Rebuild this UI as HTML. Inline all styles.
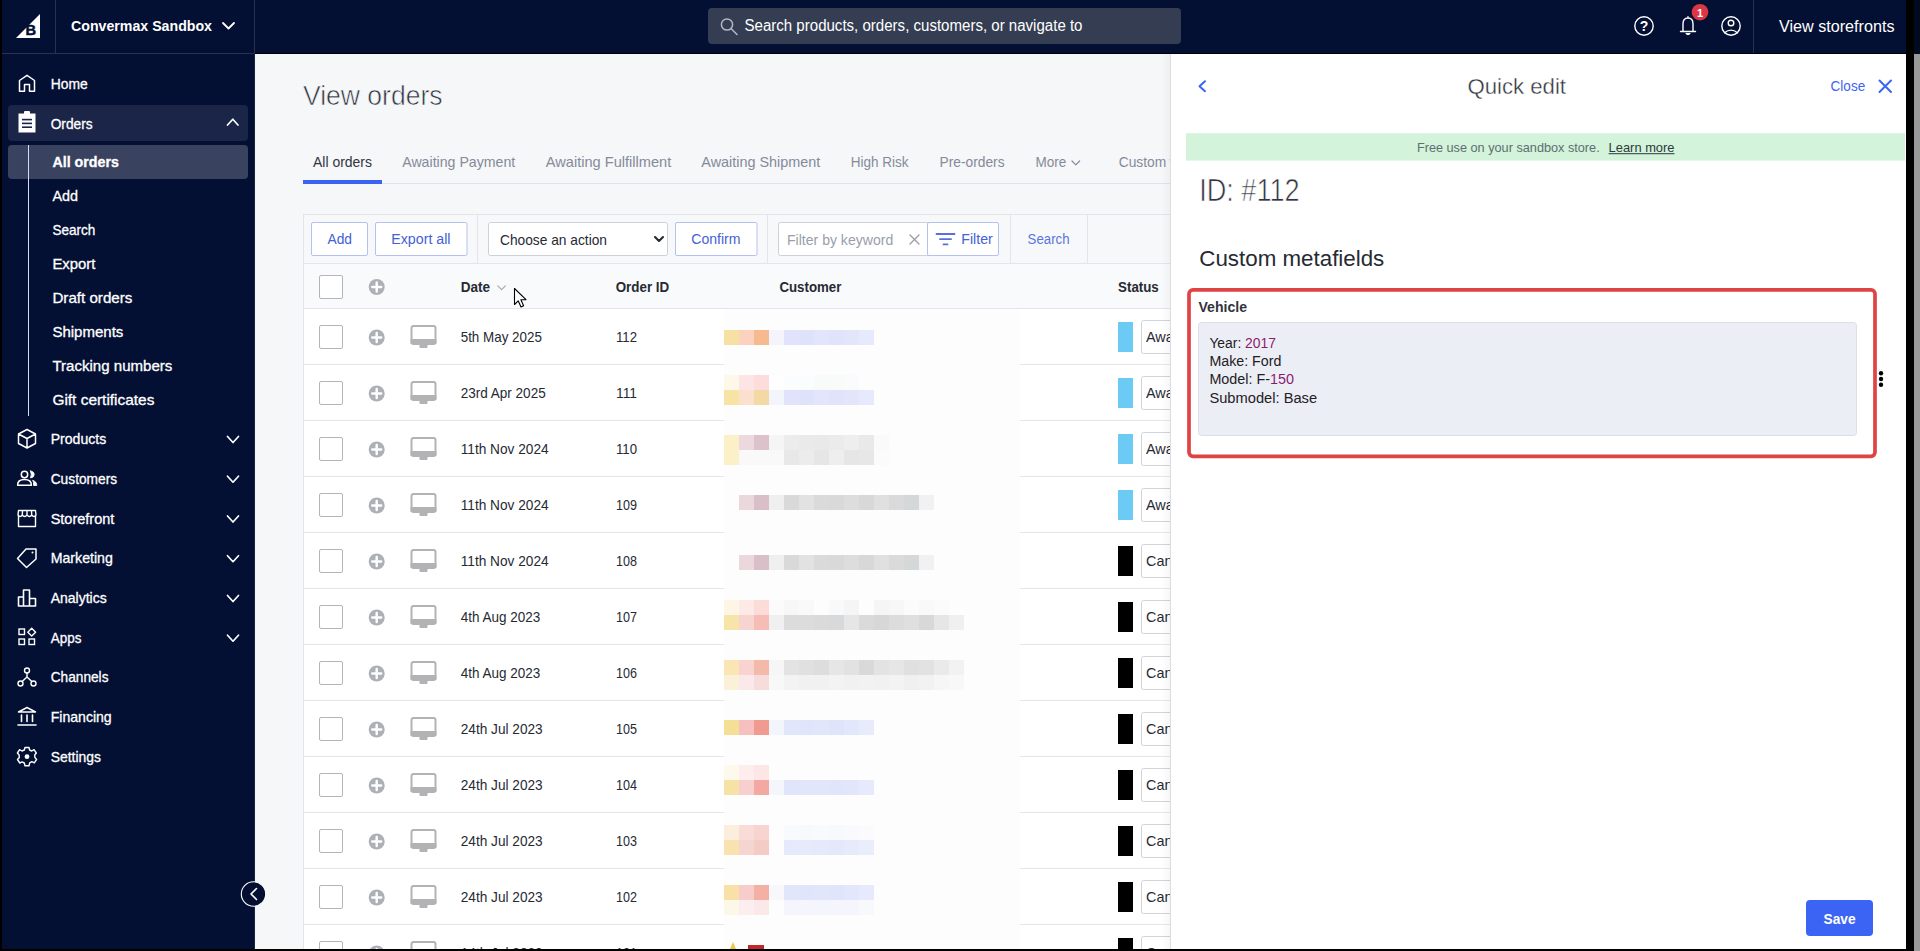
<!DOCTYPE html>
<html><head><meta charset="utf-8"><style>html,body{margin:0;padding:0;background:#000}body{width:1920px;height:951px;overflow:hidden}svg text{font-family:"Liberation Sans",sans-serif}</style></head>
<body><svg width="1920" height="951" viewBox="0 0 1920 951" style="display:block">
<rect x="0" y="0" width="1920" height="951" fill="#000" />
<rect x="2" y="0" width="1904" height="53" fill="#030f33" />
<rect x="1914" y="0" width="6" height="54" fill="#010a1f" />
<rect x="1914" y="54" width="6" height="897" fill="#999" />
<rect x="2" y="53" width="253" height="896" fill="#030f33" />
<rect x="2" y="53" width="252" height="1" fill="#283350" />
<rect x="254" y="0" width="1" height="53" fill="#283350" />
<rect x="254" y="53" width="1" height="896" fill="#1a2440" />
<rect x="55" y="0" width="1" height="53" fill="#283350" />
<rect x="1753" y="0" width="1" height="53" fill="#283350" />
<path d="M16 38 L40 14 L40 38 Z" stroke="none" stroke-width="1.5" fill="#fff" stroke-linecap="round" stroke-linejoin="round" />
<text x="25.6" y="34.6" font-size="15" font-weight="700" fill="#030f33" stroke="#030f33" stroke-width="0.5" textLength="10.6" lengthAdjust="spacingAndGlyphs">B</text>
<text x="71" y="30.8" font-size="15.1" fill="#fff" font-weight="700" textLength="141" lengthAdjust="spacingAndGlyphs" >Convermax Sandbox</text>
<path d="M223 23 L228.5 28.5 L234 23" stroke="#fff" stroke-width="1.8" fill="none" stroke-linecap="round" stroke-linejoin="round" />
<rect x="708" y="8" width="473" height="36" fill="#343d52" rx="4" />
<circle cx="727" cy="24.5" r="5.6" fill="none" stroke="#b3b8c5" stroke-width="1.5"/>
<path d="M731.2 28.8 L737 34.5" stroke="#b3b8c5" stroke-width="1.5" fill="none" stroke-linecap="round" stroke-linejoin="round" />
<text x="744.5" y="31.3" font-size="15.6" fill="#fff" textLength="338" lengthAdjust="spacingAndGlyphs" >Search products, orders, customers, or navigate to</text>
<circle cx="1644" cy="26" r="9.2" fill="none" stroke="#fff" stroke-width="1.4"/>
<text x="1644" y="31.3" font-size="14" font-weight="700" fill="#fff" text-anchor="middle">?</text>
<path d="M1683 31 L1683 24 Q1683 18 1688 18 Q1693 18 1693 24 L1693 31 M1680.5 31.5 L1695.5 31.5 M1688 16.8 L1688 18" stroke="#fff" stroke-width="1.4" fill="none" stroke-linecap="round" stroke-linejoin="round" />
<path d="M1686 33.5 Q1688 36 1690 33.5 Z" stroke="#fff" stroke-width="1.2" fill="#fff" stroke-linecap="round" stroke-linejoin="round" />
<circle cx="1700" cy="12.2" r="8.3" fill="#db3643"/>
<text x="1700" y="16.6" font-size="11" fill="#fff" font-weight="700" text-anchor="middle" >1</text>
<circle cx="1731" cy="26" r="9.2" fill="none" stroke="#fff" stroke-width="1.4"/>
<circle cx="1731" cy="23" r="2.8" fill="none" stroke="#fff" stroke-width="1.4"/>
<path d="M1724.5 32.8 Q1731 27.5 1737.5 32.8" stroke="#fff" stroke-width="1.4" fill="none" stroke-linecap="round" stroke-linejoin="round" />
<text x="1779" y="31.7" font-size="15.8" fill="#fff" textLength="115.5" lengthAdjust="spacingAndGlyphs" >View storefronts</text>
<rect x="8" y="105" width="240" height="36" fill="#1b2547" rx="4" />
<rect x="8" y="145" width="240" height="34" fill="#39425f" rx="4" />
<rect x="28" y="145" width="1" height="271" fill="#d3ddf6" />
<text x="50.7" y="88.9" font-size="14.5" fill="#fff" textLength="37" lengthAdjust="spacingAndGlyphs" stroke="#fff" stroke-width="0.3">Home</text>
<text x="50.7" y="129.1" font-size="14.5" fill="#fff" textLength="42" lengthAdjust="spacingAndGlyphs" stroke="#fff" stroke-width="0.3">Orders</text>
<text x="52.4" y="167.3" font-size="14.8" fill="#fff" font-weight="700" textLength="66.5" lengthAdjust="spacingAndGlyphs" stroke="#fff" stroke-width="0.3">All orders</text>
<text x="52.4" y="201" font-size="14.8" fill="#fff" textLength="25.6" lengthAdjust="spacingAndGlyphs" stroke="#fff" stroke-width="0.3">Add</text>
<text x="52.4" y="235" font-size="14.8" fill="#fff" textLength="43" lengthAdjust="spacingAndGlyphs" stroke="#fff" stroke-width="0.3">Search</text>
<text x="52.4" y="268.8" font-size="14.8" fill="#fff" textLength="43" lengthAdjust="spacingAndGlyphs" stroke="#fff" stroke-width="0.3">Export</text>
<text x="52.4" y="302.9" font-size="14.8" fill="#fff" textLength="80" lengthAdjust="spacingAndGlyphs" stroke="#fff" stroke-width="0.3">Draft orders</text>
<text x="52.4" y="336.8" font-size="14.8" fill="#fff" textLength="71" lengthAdjust="spacingAndGlyphs" stroke="#fff" stroke-width="0.3">Shipments</text>
<text x="52.4" y="370.7" font-size="14.8" fill="#fff" textLength="120" lengthAdjust="spacingAndGlyphs" stroke="#fff" stroke-width="0.3">Tracking numbers</text>
<text x="52.4" y="404.6" font-size="14.8" fill="#fff" textLength="102" lengthAdjust="spacingAndGlyphs" stroke="#fff" stroke-width="0.3">Gift certificates</text>
<text x="50.7" y="443.7" font-size="14.5" fill="#fff" textLength="55.5" lengthAdjust="spacingAndGlyphs" stroke="#fff" stroke-width="0.3">Products</text>
<text x="50.7" y="483.5" font-size="14.5" fill="#fff" textLength="66.5" lengthAdjust="spacingAndGlyphs" stroke="#fff" stroke-width="0.3">Customers</text>
<text x="50.7" y="523.5" font-size="14.5" fill="#fff" textLength="63.6" lengthAdjust="spacingAndGlyphs" stroke="#fff" stroke-width="0.3">Storefront</text>
<text x="50.7" y="563.2" font-size="14.5" fill="#fff" textLength="62.2" lengthAdjust="spacingAndGlyphs" stroke="#fff" stroke-width="0.3">Marketing</text>
<text x="50.7" y="602.9" font-size="14.5" fill="#fff" textLength="56" lengthAdjust="spacingAndGlyphs" stroke="#fff" stroke-width="0.3">Analytics</text>
<text x="50.7" y="642.6" font-size="14.5" fill="#fff" textLength="30.7" lengthAdjust="spacingAndGlyphs" stroke="#fff" stroke-width="0.3">Apps</text>
<text x="50.7" y="682.4" font-size="14.5" fill="#fff" textLength="57.8" lengthAdjust="spacingAndGlyphs" stroke="#fff" stroke-width="0.3">Channels</text>
<text x="50.7" y="722" font-size="14.5" fill="#fff" textLength="61" lengthAdjust="spacingAndGlyphs" stroke="#fff" stroke-width="0.3">Financing</text>
<text x="50.7" y="762.2" font-size="14.5" fill="#fff" textLength="50.3" lengthAdjust="spacingAndGlyphs" stroke="#fff" stroke-width="0.3">Settings</text>
<path d="M227.5 125 L232.8 119.2 L238 125" stroke="#fff" stroke-width="1.7" fill="none" stroke-linecap="round" stroke-linejoin="round" />
<path d="M227.5 436.5 L233 442.5 L238.5 436.5" stroke="#fff" stroke-width="1.7" fill="none" stroke-linecap="round" stroke-linejoin="round" />
<path d="M227.5 476.2 L233 482.2 L238.5 476.2" stroke="#fff" stroke-width="1.7" fill="none" stroke-linecap="round" stroke-linejoin="round" />
<path d="M227.5 516 L233 522 L238.5 516" stroke="#fff" stroke-width="1.7" fill="none" stroke-linecap="round" stroke-linejoin="round" />
<path d="M227.5 555.7 L233 561.7 L238.5 555.7" stroke="#fff" stroke-width="1.7" fill="none" stroke-linecap="round" stroke-linejoin="round" />
<path d="M227.5 595.5 L233 601.5 L238.5 595.5" stroke="#fff" stroke-width="1.7" fill="none" stroke-linecap="round" stroke-linejoin="round" />
<path d="M227.5 635.2 L233 641.2 L238.5 635.2" stroke="#fff" stroke-width="1.7" fill="none" stroke-linecap="round" stroke-linejoin="round" />
<path d="M19.5 91.2 L19.5 80.5 L27 75.3 L34.5 80.5 L34.5 91.2 L29.5 91.2 L29.5 84.5 L24.5 84.5 L24.5 91.2 Z" stroke="#fff" stroke-width="1.5" fill="none" stroke-linecap="round" stroke-linejoin="round" />
<path d="M18.5 113.5 L35.5 113.5 L35.5 132.5 L18.5 132.5 Z" stroke="none" stroke-width="1.5" fill="#fff" stroke-linecap="round" stroke-linejoin="round" />
<rect x="24" y="111" width="6" height="4" fill="#fff" rx="1" />
<rect x="22" y="118.8" width="10" height="1.6" fill="#1b2547" />
<rect x="22" y="122.6" width="10" height="1.6" fill="#1b2547" />
<rect x="22" y="126.4" width="10" height="1.6" fill="#1b2547" />
<path d="M27 429.5 L35.5 434 L35.5 443.5 L27 448 L18.5 443.5 L18.5 434 Z M18.5 434 L27 438.5 L35.5 434 M27 438.5 L27 448" stroke="#fff" stroke-width="1.5" fill="none" stroke-linecap="round" stroke-linejoin="round" />
<circle cx="24.5" cy="474.5" r="3.2" fill="none" stroke="#fff" stroke-width="1.5"/>
<path d="M17.6 485.2 Q17.6 479.6 24.5 479.6 Q31.4 479.6 31.4 485.2 Z" stroke="#fff" stroke-width="1.5" fill="none" stroke-linecap="round" stroke-linejoin="round" />
<path d="M30.5 471 Q34.2 471.5 34.2 474.5 Q34.2 477.5 30.5 478 Q32 474.5 30.5 471 Z" stroke="#fff" stroke-width="0.8" fill="#fff" stroke-linecap="round" stroke-linejoin="round" />
<path d="M33 480.5 Q36.8 481.5 36.8 485.5 L33.5 485.5 Q33.8 482.5 33 480.5 Z" stroke="#fff" stroke-width="0.8" fill="#fff" stroke-linecap="round" stroke-linejoin="round" />
<path d="M18.5 516 L18.5 526.5 L35.5 526.5 L35.5 516 M18.5 510.5 L35.5 510.5 L36 515 Q34 518 31.7 515 Q29.5 518 27 515 Q24.5 518 22.3 515 Q20 518 18 515 Z M22.5 510.5 L22.3 515 M27 510.5 L27 515 M31.5 510.5 L31.7 515" stroke="#fff" stroke-width="1.4" fill="none" stroke-linecap="round" stroke-linejoin="round" />
<path d="M26 549 L36 549 L36 559 L26.5 567.5 L17.5 558.5 Z" stroke="#fff" stroke-width="1.5" fill="none" stroke-linecap="round" stroke-linejoin="round" />
<circle cx="32.5" cy="552.5" r="1" fill="#fff"/>
<path d="M18.5 606 L18.5 597 L23.5 597 L23.5 606 M23.5 606 L23.5 590 L29.5 590 L29.5 606 M29.5 606 L29.5 598.5 L35.5 598.5 L35.5 606 Z M18.5 606 L35.5 606" stroke="#fff" stroke-width="1.6" fill="none" stroke-linecap="round" stroke-linejoin="round" />
<rect x="19" y="629" width="5.5" height="5.5" fill="none" stroke="#fff" stroke-width="1.4" />
<rect x="19" y="639" width="5.5" height="5.5" fill="none" stroke="#fff" stroke-width="1.4" />
<rect x="29" y="639" width="5.5" height="5.5" fill="none" stroke="#fff" stroke-width="1.4" />
<path d="M31.7 628.3 L35.6 632.2 L31.7 636.1 L27.8 632.2 Z" stroke="#fff" stroke-width="1.4" fill="none" stroke-linecap="round" stroke-linejoin="round" />
<circle cx="27" cy="670.5" r="2.5" fill="none" stroke="#fff" stroke-width="1.4"/>
<circle cx="20.5" cy="683.5" r="2.5" fill="none" stroke="#fff" stroke-width="1.4"/>
<circle cx="33.5" cy="683.5" r="2.5" fill="none" stroke="#fff" stroke-width="1.4"/>
<path d="M27 673 L27 677 L22.2 681.5 M27 677 L31.8 681.5" stroke="#fff" stroke-width="1.4" fill="none" stroke-linecap="round" stroke-linejoin="round" />
<path d="M18.5 712 L27 707.5 L35.5 712 Z" stroke="#fff" stroke-width="1.5" fill="none" stroke-linecap="round" stroke-linejoin="round" />
<path d="M21.5 715 L21.5 721.5 M27 715 L27 721.5 M32.5 715 L32.5 721.5 M18 725 L36 725" stroke="#fff" stroke-width="1.6" fill="none" stroke-linecap="round" stroke-linejoin="round" />
<path d="M25 747.5 L29 747.5 L29.6 750 L31.8 751 L34 749.7 L36.3 753 L34.7 755 L34.9 757.5 L36.6 759.4 L34.3 762.8 L31.9 761.7 L29.7 762.9 L29 765.8 L25 765.8 L24.3 763 L22.1 761.9 L19.8 763 L17.5 759.5 L19.3 757.5 L19.1 755 L17.4 753 L19.6 749.7 L22 751 L24.3 750 Z" stroke="#fff" stroke-width="1.4" fill="none" stroke-linecap="round" stroke-linejoin="round" />
<circle cx="27" cy="756.7" r="2.4" fill="#fff"/>
<svg x="255" y="54" width="916" height="895" overflow="hidden"><g transform="translate(-255,-54)">
<rect x="255" y="54" width="916" height="895" fill="#f5f7f8" />
<text x="303" y="104.6" font-size="28.5" fill="#313440" textLength="139.5" lengthAdjust="spacingAndGlyphs" stroke="#f5f7f8" stroke-width="0.65">View orders</text>
<rect x="303" y="183" width="868" height="1" fill="#dfe2e8" />
<rect x="303" y="180" width="79" height="4" fill="#3c64f4" />
<text x="313" y="166.7" font-size="14.4" fill="#313440" textLength="59" lengthAdjust="spacingAndGlyphs" >All orders</text>
<text x="402.2" y="166.7" font-size="14.4" fill="#858a9b" textLength="113.1" lengthAdjust="spacingAndGlyphs" >Awaiting Payment</text>
<text x="545.8" y="166.7" font-size="14.4" fill="#858a9b" textLength="125.4" lengthAdjust="spacingAndGlyphs" >Awaiting Fulfillment</text>
<text x="701.3" y="166.7" font-size="14.4" fill="#858a9b" textLength="119" lengthAdjust="spacingAndGlyphs" >Awaiting Shipment</text>
<text x="850.8" y="166.7" font-size="14.4" fill="#858a9b" textLength="57.8" lengthAdjust="spacingAndGlyphs" >High Risk</text>
<text x="939.5" y="166.7" font-size="14.4" fill="#858a9b" textLength="65.1" lengthAdjust="spacingAndGlyphs" >Pre-orders</text>
<text x="1035.5" y="166.7" font-size="14.4" fill="#858a9b" textLength="30.8" lengthAdjust="spacingAndGlyphs" >More</text>
<text x="1118.7" y="166.7" font-size="14.4" fill="#858a9b" textLength="47.6" lengthAdjust="spacingAndGlyphs" >Custom</text>
<text x="1169.5" y="166.7" font-size="14.4" fill="#858a9b" textLength="7" lengthAdjust="spacingAndGlyphs" >v</text>
<path d="M1072 161 L1075.8 164.8 L1079.6 161" stroke="#858a9b" stroke-width="1.2" fill="none" stroke-linecap="round" stroke-linejoin="round" />
<rect x="303" y="214" width="868" height="735" fill="#fff" />
<rect x="303" y="214" width="868" height="50" fill="#f7f8fa" />
<rect x="303" y="264" width="868" height="44" fill="#f9fafb" />
<rect x="303" y="214" width="868" height="1" fill="#e3e5ea" />
<rect x="303" y="263" width="868" height="1" fill="#e3e5ea" />
<rect x="303" y="308" width="868" height="1" fill="#e3e5ea" />
<rect x="303" y="214" width="1" height="735" fill="#e3e5ea" />
<rect x="477" y="215" width="1" height="48" fill="#e3e5ea" />
<rect x="767" y="215" width="1" height="48" fill="#e3e5ea" />
<rect x="1010" y="215" width="1" height="48" fill="#e3e5ea" />
<rect x="1087" y="215" width="1" height="48" fill="#e3e5ea" />
<rect x="311.5" y="222.5" width="56" height="33" fill="#fff" rx="1.5" stroke="#b5c1ee" stroke-width="1" />
<text x="327.5" y="243.7" font-size="15.3" fill="#4461d6" textLength="24.5" lengthAdjust="spacingAndGlyphs" >Add</text>
<rect x="375.5" y="222.5" width="91.5" height="33" fill="#fff" rx="1.5" stroke="#b5c1ee" stroke-width="1" />
<text x="391.3" y="243.7" font-size="15.3" fill="#4461d6" textLength="59.2" lengthAdjust="spacingAndGlyphs" >Export all</text>
<rect x="488.5" y="222.5" width="179" height="33" fill="#fff" rx="2" stroke="#cfd1d6" stroke-width="1" />
<text x="500" y="245" font-size="14.6" fill="#262a33" textLength="107" lengthAdjust="spacingAndGlyphs" >Choose an action</text>
<path d="M655 237 L659 241 L663 237" stroke="#262a33" stroke-width="2.1" fill="none" stroke-linecap="round" stroke-linejoin="round" />
<rect x="675.5" y="222.5" width="81.5" height="33" fill="#fff" rx="1.5" stroke="#b5c1ee" stroke-width="1" />
<text x="691.3" y="243.7" font-size="15.3" fill="#4461d6" textLength="49.2" lengthAdjust="spacingAndGlyphs" >Confirm</text>
<rect x="778.5" y="222.5" width="220" height="33" fill="#fff" rx="2" stroke="#cfd1d6" stroke-width="1" />
<text x="787" y="244.6" font-size="14.6" fill="#9a9eab" textLength="106.2" lengthAdjust="spacingAndGlyphs" >Filter by keyword</text>
<path d="M910 235 L919 244 M919 235 L910 244" stroke="#9a9da5" stroke-width="1.3" fill="none" stroke-linecap="round" stroke-linejoin="round" />
<rect x="927.5" y="222.5" width="71" height="33" fill="#fff" rx="1.5" stroke="#b5c1ee" stroke-width="1" />
<path d="M936.5 234 L954.5 234 M940 239.2 L951 239.2 M943.5 244.4 L947.5 244.4" stroke="#5670dc" stroke-width="1.8" fill="none" stroke-linecap="round" stroke-linejoin="round" />
<text x="961.3" y="243.7" font-size="15.3" fill="#4461d6" textLength="31.5" lengthAdjust="spacingAndGlyphs" >Filter</text>
<text x="1027.6" y="243.7" font-size="15.3" fill="#5b74dd" textLength="42" lengthAdjust="spacingAndGlyphs" >Search</text>
<rect x="319.5" y="275.5" width="23" height="23" fill="#fff" rx="1.5" stroke="#b3b5bb" stroke-width="1" />
<circle cx="376.7" cy="287" r="8" fill="#aeb0b8"/>
<path d="M376.7 282.5 L376.7 291.5 M372.2 287 L381.2 287" stroke="#fff" stroke-width="2.4" fill="none" stroke-linecap="round" stroke-linejoin="round" stroke-linecap="butt"/>
<text x="460.7" y="291.9" font-size="15.5" fill="#262a33" font-weight="700" textLength="29.3" lengthAdjust="spacingAndGlyphs" >Date</text>
<path d="M497.8 285.8 L501.6 289.6 L505.4 285.8" stroke="#a8aab0" stroke-width="1.2" fill="none" stroke-linecap="round" stroke-linejoin="round" />
<text x="615.7" y="291.9" font-size="15.5" fill="#262a33" font-weight="700" textLength="53.5" lengthAdjust="spacingAndGlyphs" >Order ID</text>
<text x="779.4" y="291.9" font-size="15.5" fill="#262a33" font-weight="700" textLength="62" lengthAdjust="spacingAndGlyphs" >Customer</text>
<text x="1118.1" y="291.9" font-size="15.5" fill="#262a33" font-weight="700" textLength="40.6" lengthAdjust="spacingAndGlyphs" >Status</text>
<path d="M514.5 288.5 L514.5 304.5 L518.2 300.8 L521 307 L523.6 305.8 L520.9 299.8 L526 299.6 Z" stroke="#000" stroke-width="1.1" fill="#fff" stroke-linecap="round" stroke-linejoin="round" />
<rect x="319.5" y="325.5" width="23" height="23" fill="#fff" rx="1.5" stroke="#b3b5bb" stroke-width="1" />
<circle cx="376.7" cy="337.5" r="8" fill="#aeb0b8"/>
<path d="M376.7 333 L376.7 342 M372.2 337.5 L381.2 337.5" stroke="#fff" stroke-width="2.4" fill="none" stroke-linecap="round" stroke-linejoin="round" stroke-linecap="butt"/>
<rect x="411.5" y="326" width="24" height="18" fill="#fff" rx="2" stroke="#b3b3b6" stroke-width="2" />
<rect x="410.5" y="339" width="26" height="5" fill="#b3b3b6" rx="1" />
<rect x="419.5" y="344" width="8" height="4" fill="#b3b3b6" rx="1" />
<text x="460.7" y="341.7" font-size="14.4" fill="#262a33" textLength="81.2" lengthAdjust="spacingAndGlyphs" >5th May 2025</text>
<text x="616" y="341.7" font-size="14.4" fill="#262a33" textLength="21" lengthAdjust="spacingAndGlyphs" >112</text>
<rect x="1118" y="322" width="15" height="30" fill="#6ccbf4" />
<rect x="1141.5" y="320.5" width="60" height="33" fill="#fff" rx="2" stroke="#d2d4d9" stroke-width="1" />
<text x="1146" y="341.7" font-size="14.4" fill="#262a33" >Awaiting</text>
<rect x="303" y="364" width="868" height="1" fill="#e5e6ea" />
<rect x="319.5" y="381.5" width="23" height="23" fill="#fff" rx="1.5" stroke="#b3b5bb" stroke-width="1" />
<circle cx="376.7" cy="393.5" r="8" fill="#aeb0b8"/>
<path d="M376.7 389 L376.7 398 M372.2 393.5 L381.2 393.5" stroke="#fff" stroke-width="2.4" fill="none" stroke-linecap="round" stroke-linejoin="round" stroke-linecap="butt"/>
<rect x="411.5" y="382" width="24" height="18" fill="#fff" rx="2" stroke="#b3b3b6" stroke-width="2" />
<rect x="410.5" y="395" width="26" height="5" fill="#b3b3b6" rx="1" />
<rect x="419.5" y="400" width="8" height="4" fill="#b3b3b6" rx="1" />
<text x="460.7" y="397.7" font-size="14.4" fill="#262a33" textLength="85" lengthAdjust="spacingAndGlyphs" >23rd Apr 2025</text>
<text x="616" y="397.7" font-size="14.4" fill="#262a33" textLength="21" lengthAdjust="spacingAndGlyphs" >111</text>
<rect x="1118" y="378" width="15" height="30" fill="#6ccbf4" />
<rect x="1141.5" y="376.5" width="60" height="33" fill="#fff" rx="2" stroke="#d2d4d9" stroke-width="1" />
<text x="1146" y="397.7" font-size="14.4" fill="#262a33" >Awaiting</text>
<rect x="303" y="420" width="868" height="1" fill="#e5e6ea" />
<rect x="319.5" y="437.5" width="23" height="23" fill="#fff" rx="1.5" stroke="#b3b5bb" stroke-width="1" />
<circle cx="376.7" cy="449.5" r="8" fill="#aeb0b8"/>
<path d="M376.7 445 L376.7 454 M372.2 449.5 L381.2 449.5" stroke="#fff" stroke-width="2.4" fill="none" stroke-linecap="round" stroke-linejoin="round" stroke-linecap="butt"/>
<rect x="411.5" y="438" width="24" height="18" fill="#fff" rx="2" stroke="#b3b3b6" stroke-width="2" />
<rect x="410.5" y="451" width="26" height="5" fill="#b3b3b6" rx="1" />
<rect x="419.5" y="456" width="8" height="4" fill="#b3b3b6" rx="1" />
<text x="460.7" y="453.7" font-size="14.4" fill="#262a33" textLength="88" lengthAdjust="spacingAndGlyphs" >11th Nov 2024</text>
<text x="616" y="453.7" font-size="14.4" fill="#262a33" textLength="21" lengthAdjust="spacingAndGlyphs" >110</text>
<rect x="1118" y="434" width="15" height="30" fill="#6ccbf4" />
<rect x="1141.5" y="432.5" width="60" height="33" fill="#fff" rx="2" stroke="#d2d4d9" stroke-width="1" />
<text x="1146" y="453.7" font-size="14.4" fill="#262a33" >Awaiting</text>
<rect x="303" y="476" width="868" height="1" fill="#e5e6ea" />
<rect x="319.5" y="493.5" width="23" height="23" fill="#fff" rx="1.5" stroke="#b3b5bb" stroke-width="1" />
<circle cx="376.7" cy="505.5" r="8" fill="#aeb0b8"/>
<path d="M376.7 501 L376.7 510 M372.2 505.5 L381.2 505.5" stroke="#fff" stroke-width="2.4" fill="none" stroke-linecap="round" stroke-linejoin="round" stroke-linecap="butt"/>
<rect x="411.5" y="494" width="24" height="18" fill="#fff" rx="2" stroke="#b3b3b6" stroke-width="2" />
<rect x="410.5" y="507" width="26" height="5" fill="#b3b3b6" rx="1" />
<rect x="419.5" y="512" width="8" height="4" fill="#b3b3b6" rx="1" />
<text x="460.7" y="509.7" font-size="14.4" fill="#262a33" textLength="88" lengthAdjust="spacingAndGlyphs" >11th Nov 2024</text>
<text x="616" y="509.7" font-size="14.4" fill="#262a33" textLength="21" lengthAdjust="spacingAndGlyphs" >109</text>
<rect x="1118" y="490" width="15" height="30" fill="#6ccbf4" />
<rect x="1141.5" y="488.5" width="60" height="33" fill="#fff" rx="2" stroke="#d2d4d9" stroke-width="1" />
<text x="1146" y="509.7" font-size="14.4" fill="#262a33" >Awaiting</text>
<rect x="303" y="532" width="868" height="1" fill="#e5e6ea" />
<rect x="319.5" y="549.5" width="23" height="23" fill="#fff" rx="1.5" stroke="#b3b5bb" stroke-width="1" />
<circle cx="376.7" cy="561.5" r="8" fill="#aeb0b8"/>
<path d="M376.7 557 L376.7 566 M372.2 561.5 L381.2 561.5" stroke="#fff" stroke-width="2.4" fill="none" stroke-linecap="round" stroke-linejoin="round" stroke-linecap="butt"/>
<rect x="411.5" y="550" width="24" height="18" fill="#fff" rx="2" stroke="#b3b3b6" stroke-width="2" />
<rect x="410.5" y="563" width="26" height="5" fill="#b3b3b6" rx="1" />
<rect x="419.5" y="568" width="8" height="4" fill="#b3b3b6" rx="1" />
<text x="460.7" y="565.7" font-size="14.4" fill="#262a33" textLength="88" lengthAdjust="spacingAndGlyphs" >11th Nov 2024</text>
<text x="616" y="565.7" font-size="14.4" fill="#262a33" textLength="21" lengthAdjust="spacingAndGlyphs" >108</text>
<rect x="1118" y="546" width="15" height="30" fill="#000" />
<rect x="1141.5" y="544.5" width="60" height="33" fill="#fff" rx="2" stroke="#d2d4d9" stroke-width="1" />
<text x="1146" y="565.7" font-size="14.4" fill="#262a33" >Cancelled</text>
<rect x="303" y="588" width="868" height="1" fill="#e5e6ea" />
<rect x="319.5" y="605.5" width="23" height="23" fill="#fff" rx="1.5" stroke="#b3b5bb" stroke-width="1" />
<circle cx="376.7" cy="617.5" r="8" fill="#aeb0b8"/>
<path d="M376.7 613 L376.7 622 M372.2 617.5 L381.2 617.5" stroke="#fff" stroke-width="2.4" fill="none" stroke-linecap="round" stroke-linejoin="round" stroke-linecap="butt"/>
<rect x="411.5" y="606" width="24" height="18" fill="#fff" rx="2" stroke="#b3b3b6" stroke-width="2" />
<rect x="410.5" y="619" width="26" height="5" fill="#b3b3b6" rx="1" />
<rect x="419.5" y="624" width="8" height="4" fill="#b3b3b6" rx="1" />
<text x="460.7" y="621.7" font-size="14.4" fill="#262a33" textLength="79.5" lengthAdjust="spacingAndGlyphs" >4th Aug 2023</text>
<text x="616" y="621.7" font-size="14.4" fill="#262a33" textLength="21" lengthAdjust="spacingAndGlyphs" >107</text>
<rect x="1118" y="602" width="15" height="30" fill="#000" />
<rect x="1141.5" y="600.5" width="60" height="33" fill="#fff" rx="2" stroke="#d2d4d9" stroke-width="1" />
<text x="1146" y="621.7" font-size="14.4" fill="#262a33" >Cancelled</text>
<rect x="303" y="644" width="868" height="1" fill="#e5e6ea" />
<rect x="319.5" y="661.5" width="23" height="23" fill="#fff" rx="1.5" stroke="#b3b5bb" stroke-width="1" />
<circle cx="376.7" cy="673.5" r="8" fill="#aeb0b8"/>
<path d="M376.7 669 L376.7 678 M372.2 673.5 L381.2 673.5" stroke="#fff" stroke-width="2.4" fill="none" stroke-linecap="round" stroke-linejoin="round" stroke-linecap="butt"/>
<rect x="411.5" y="662" width="24" height="18" fill="#fff" rx="2" stroke="#b3b3b6" stroke-width="2" />
<rect x="410.5" y="675" width="26" height="5" fill="#b3b3b6" rx="1" />
<rect x="419.5" y="680" width="8" height="4" fill="#b3b3b6" rx="1" />
<text x="460.7" y="677.7" font-size="14.4" fill="#262a33" textLength="79.5" lengthAdjust="spacingAndGlyphs" >4th Aug 2023</text>
<text x="616" y="677.7" font-size="14.4" fill="#262a33" textLength="21" lengthAdjust="spacingAndGlyphs" >106</text>
<rect x="1118" y="658" width="15" height="30" fill="#000" />
<rect x="1141.5" y="656.5" width="60" height="33" fill="#fff" rx="2" stroke="#d2d4d9" stroke-width="1" />
<text x="1146" y="677.7" font-size="14.4" fill="#262a33" >Cancelled</text>
<rect x="303" y="700" width="868" height="1" fill="#e5e6ea" />
<rect x="319.5" y="717.5" width="23" height="23" fill="#fff" rx="1.5" stroke="#b3b5bb" stroke-width="1" />
<circle cx="376.7" cy="729.5" r="8" fill="#aeb0b8"/>
<path d="M376.7 725 L376.7 734 M372.2 729.5 L381.2 729.5" stroke="#fff" stroke-width="2.4" fill="none" stroke-linecap="round" stroke-linejoin="round" stroke-linecap="butt"/>
<rect x="411.5" y="718" width="24" height="18" fill="#fff" rx="2" stroke="#b3b3b6" stroke-width="2" />
<rect x="410.5" y="731" width="26" height="5" fill="#b3b3b6" rx="1" />
<rect x="419.5" y="736" width="8" height="4" fill="#b3b3b6" rx="1" />
<text x="460.7" y="733.7" font-size="14.4" fill="#262a33" textLength="82" lengthAdjust="spacingAndGlyphs" >24th Jul 2023</text>
<text x="616" y="733.7" font-size="14.4" fill="#262a33" textLength="21" lengthAdjust="spacingAndGlyphs" >105</text>
<rect x="1118" y="714" width="15" height="30" fill="#000" />
<rect x="1141.5" y="712.5" width="60" height="33" fill="#fff" rx="2" stroke="#d2d4d9" stroke-width="1" />
<text x="1146" y="733.7" font-size="14.4" fill="#262a33" >Cancelled</text>
<rect x="303" y="756" width="868" height="1" fill="#e5e6ea" />
<rect x="319.5" y="773.5" width="23" height="23" fill="#fff" rx="1.5" stroke="#b3b5bb" stroke-width="1" />
<circle cx="376.7" cy="785.5" r="8" fill="#aeb0b8"/>
<path d="M376.7 781 L376.7 790 M372.2 785.5 L381.2 785.5" stroke="#fff" stroke-width="2.4" fill="none" stroke-linecap="round" stroke-linejoin="round" stroke-linecap="butt"/>
<rect x="411.5" y="774" width="24" height="18" fill="#fff" rx="2" stroke="#b3b3b6" stroke-width="2" />
<rect x="410.5" y="787" width="26" height="5" fill="#b3b3b6" rx="1" />
<rect x="419.5" y="792" width="8" height="4" fill="#b3b3b6" rx="1" />
<text x="460.7" y="789.7" font-size="14.4" fill="#262a33" textLength="82" lengthAdjust="spacingAndGlyphs" >24th Jul 2023</text>
<text x="616" y="789.7" font-size="14.4" fill="#262a33" textLength="21" lengthAdjust="spacingAndGlyphs" >104</text>
<rect x="1118" y="770" width="15" height="30" fill="#000" />
<rect x="1141.5" y="768.5" width="60" height="33" fill="#fff" rx="2" stroke="#d2d4d9" stroke-width="1" />
<text x="1146" y="789.7" font-size="14.4" fill="#262a33" >Cancelled</text>
<rect x="303" y="812" width="868" height="1" fill="#e5e6ea" />
<rect x="319.5" y="829.5" width="23" height="23" fill="#fff" rx="1.5" stroke="#b3b5bb" stroke-width="1" />
<circle cx="376.7" cy="841.5" r="8" fill="#aeb0b8"/>
<path d="M376.7 837 L376.7 846 M372.2 841.5 L381.2 841.5" stroke="#fff" stroke-width="2.4" fill="none" stroke-linecap="round" stroke-linejoin="round" stroke-linecap="butt"/>
<rect x="411.5" y="830" width="24" height="18" fill="#fff" rx="2" stroke="#b3b3b6" stroke-width="2" />
<rect x="410.5" y="843" width="26" height="5" fill="#b3b3b6" rx="1" />
<rect x="419.5" y="848" width="8" height="4" fill="#b3b3b6" rx="1" />
<text x="460.7" y="845.7" font-size="14.4" fill="#262a33" textLength="82" lengthAdjust="spacingAndGlyphs" >24th Jul 2023</text>
<text x="616" y="845.7" font-size="14.4" fill="#262a33" textLength="21" lengthAdjust="spacingAndGlyphs" >103</text>
<rect x="1118" y="826" width="15" height="30" fill="#000" />
<rect x="1141.5" y="824.5" width="60" height="33" fill="#fff" rx="2" stroke="#d2d4d9" stroke-width="1" />
<text x="1146" y="845.7" font-size="14.4" fill="#262a33" >Cancelled</text>
<rect x="303" y="868" width="868" height="1" fill="#e5e6ea" />
<rect x="319.5" y="885.5" width="23" height="23" fill="#fff" rx="1.5" stroke="#b3b5bb" stroke-width="1" />
<circle cx="376.7" cy="897.5" r="8" fill="#aeb0b8"/>
<path d="M376.7 893 L376.7 902 M372.2 897.5 L381.2 897.5" stroke="#fff" stroke-width="2.4" fill="none" stroke-linecap="round" stroke-linejoin="round" stroke-linecap="butt"/>
<rect x="411.5" y="886" width="24" height="18" fill="#fff" rx="2" stroke="#b3b3b6" stroke-width="2" />
<rect x="410.5" y="899" width="26" height="5" fill="#b3b3b6" rx="1" />
<rect x="419.5" y="904" width="8" height="4" fill="#b3b3b6" rx="1" />
<text x="460.7" y="901.7" font-size="14.4" fill="#262a33" textLength="82" lengthAdjust="spacingAndGlyphs" >24th Jul 2023</text>
<text x="616" y="901.7" font-size="14.4" fill="#262a33" textLength="21" lengthAdjust="spacingAndGlyphs" >102</text>
<rect x="1118" y="882" width="15" height="30" fill="#000" />
<rect x="1141.5" y="880.5" width="60" height="33" fill="#fff" rx="2" stroke="#d2d4d9" stroke-width="1" />
<text x="1146" y="901.7" font-size="14.4" fill="#262a33" >Cancelled</text>
<rect x="303" y="924" width="868" height="1" fill="#e5e6ea" />
<rect x="319.5" y="941.5" width="23" height="23" fill="#fff" rx="1.5" stroke="#b3b5bb" stroke-width="1" />
<circle cx="376.7" cy="953.5" r="8" fill="#aeb0b8"/>
<path d="M376.7 949 L376.7 958 M372.2 953.5 L381.2 953.5" stroke="#fff" stroke-width="2.4" fill="none" stroke-linecap="round" stroke-linejoin="round" stroke-linecap="butt"/>
<rect x="411.5" y="942" width="24" height="18" fill="#fff" rx="2" stroke="#b3b3b6" stroke-width="2" />
<rect x="410.5" y="955" width="26" height="5" fill="#b3b3b6" rx="1" />
<rect x="419.5" y="960" width="8" height="4" fill="#b3b3b6" rx="1" />
<text x="460.7" y="957.7" font-size="14.4" fill="#262a33" textLength="82" lengthAdjust="spacingAndGlyphs" >14th Jul 2023</text>
<text x="616" y="957.7" font-size="14.4" fill="#262a33" textLength="21" lengthAdjust="spacingAndGlyphs" >101</text>
<rect x="1118" y="938" width="15" height="30" fill="#000" />
<rect x="1141.5" y="936.5" width="60" height="33" fill="#fff" rx="2" stroke="#d2d4d9" stroke-width="1" />
<text x="1146" y="957.7" font-size="14.4" fill="#262a33" >Cancelled</text>
<rect x="724" y="309" width="296" height="640" fill="#fdfdfd" />
<rect x="724" y="330" width="15" height="15" fill="#f7e0a3" />
<rect x="739" y="330" width="15" height="15" fill="#fcd2bf" />
<rect x="754" y="330" width="15" height="15" fill="#f7b98e" />
<rect x="769" y="330" width="15" height="15" fill="#f3f4fc" />
<rect x="784" y="330" width="15" height="15" fill="#e0e3fb" />
<rect x="799" y="330" width="15" height="15" fill="#dfe2fb" />
<rect x="814" y="330" width="15" height="15" fill="#e2e5fb" />
<rect x="829" y="330" width="15" height="15" fill="#e1e3fb" />
<rect x="844" y="330" width="15" height="15" fill="#e3e5fb" />
<rect x="859" y="330" width="15" height="15" fill="#e7e9fc" />
<rect x="724" y="375" width="15" height="15" fill="#fdf8e8" />
<rect x="739" y="375" width="15" height="15" fill="#fde5e5" />
<rect x="754" y="375" width="15" height="15" fill="#fddcdc" />
<rect x="769" y="375" width="15" height="15" fill="#fefefe" />
<rect x="784" y="375" width="15" height="15" fill="#fbfcfd" />
<rect x="799" y="375" width="15" height="15" fill="#fbfcfd" />
<rect x="814" y="375" width="15" height="15" fill="#f9fbfb" />
<rect x="829" y="375" width="15" height="15" fill="#f9fbfb" />
<rect x="844" y="375" width="15" height="15" fill="#fbfbfd" />
<rect x="859" y="375" width="15" height="15" fill="#fdfdfd" />
<rect x="724" y="390" width="15" height="15" fill="#f7e4a5" />
<rect x="739" y="390" width="15" height="15" fill="#fbe1cd" />
<rect x="754" y="390" width="15" height="15" fill="#f5d9a5" />
<rect x="769" y="390" width="15" height="15" fill="#f3f5fc" />
<rect x="784" y="390" width="15" height="15" fill="#e0e3fb" />
<rect x="799" y="390" width="15" height="15" fill="#dfe2fb" />
<rect x="814" y="390" width="15" height="15" fill="#e2e5fb" />
<rect x="829" y="390" width="15" height="15" fill="#e1e3fb" />
<rect x="844" y="390" width="15" height="15" fill="#e3e5fb" />
<rect x="859" y="390" width="15" height="15" fill="#e7e9fc" />
<rect x="724" y="435" width="15" height="15" fill="#fbf0c8" />
<rect x="739" y="435" width="15" height="15" fill="#ecd9dd" />
<rect x="754" y="435" width="15" height="15" fill="#dcc2cb" />
<rect x="769" y="435" width="15" height="15" fill="#f5f5f5" />
<rect x="784" y="435" width="15" height="15" fill="#ececec" />
<rect x="799" y="435" width="15" height="15" fill="#eaeaea" />
<rect x="814" y="435" width="15" height="15" fill="#e9e9ea" />
<rect x="829" y="435" width="15" height="15" fill="#ebebeb" />
<rect x="844" y="435" width="15" height="15" fill="#eeeeee" />
<rect x="859" y="435" width="15" height="15" fill="#e9e9e9" />
<rect x="874" y="435" width="15" height="15" fill="#fafafa" />
<rect x="724" y="450" width="15" height="15" fill="#fbf0c8" />
<rect x="739" y="450" width="15" height="15" fill="#f9f9f9" />
<rect x="754" y="450" width="15" height="15" fill="#f9f9f9" />
<rect x="769" y="450" width="15" height="15" fill="#f9f9f9" />
<rect x="784" y="450" width="15" height="15" fill="#e8e8e8" />
<rect x="799" y="450" width="15" height="15" fill="#ececec" />
<rect x="814" y="450" width="15" height="15" fill="#e6e6e6" />
<rect x="829" y="450" width="15" height="15" fill="#eeeeee" />
<rect x="844" y="450" width="15" height="15" fill="#e6e6e6" />
<rect x="859" y="450" width="15" height="15" fill="#e7e7e7" />
<rect x="874" y="450" width="15" height="15" fill="#fbfbfb" />
<rect x="739" y="495" width="15" height="15" fill="#ebd8dd" />
<rect x="754" y="495" width="15" height="15" fill="#d9c0c8" />
<rect x="769" y="495" width="15" height="15" fill="#efefef" />
<rect x="784" y="495" width="15" height="15" fill="#d9d9d9" />
<rect x="799" y="495" width="15" height="15" fill="#e2e2e3" />
<rect x="814" y="495" width="15" height="15" fill="#dadada" />
<rect x="829" y="495" width="15" height="15" fill="#d9d9da" />
<rect x="844" y="495" width="15" height="15" fill="#dddddd" />
<rect x="859" y="495" width="15" height="15" fill="#d8d8d9" />
<rect x="874" y="495" width="15" height="15" fill="#e0e0e0" />
<rect x="889" y="495" width="15" height="15" fill="#dadadb" />
<rect x="904" y="495" width="15" height="15" fill="#d5d8d9" />
<rect x="919" y="495" width="15" height="15" fill="#f1f1f3" />
<rect x="739" y="555" width="15" height="15" fill="#ebd8dd" />
<rect x="754" y="555" width="15" height="15" fill="#d9c0c8" />
<rect x="769" y="555" width="15" height="15" fill="#efefef" />
<rect x="784" y="555" width="15" height="15" fill="#d9d9d9" />
<rect x="799" y="555" width="15" height="15" fill="#e2e2e3" />
<rect x="814" y="555" width="15" height="15" fill="#dadada" />
<rect x="829" y="555" width="15" height="15" fill="#d9d9da" />
<rect x="844" y="555" width="15" height="15" fill="#dddddd" />
<rect x="859" y="555" width="15" height="15" fill="#d8d8d9" />
<rect x="874" y="555" width="15" height="15" fill="#e0e0e0" />
<rect x="889" y="555" width="15" height="15" fill="#dadadb" />
<rect x="904" y="555" width="15" height="15" fill="#d5d8d9" />
<rect x="919" y="555" width="15" height="15" fill="#f1f1f3" />
<rect x="724" y="600" width="15" height="15" fill="#fdf5e6" />
<rect x="739" y="600" width="15" height="15" fill="#fde9e6" />
<rect x="754" y="600" width="15" height="15" fill="#fcdcd8" />
<rect x="769" y="600" width="15" height="15" fill="#fbfbfb" />
<rect x="784" y="600" width="15" height="15" fill="#f7f7f7" />
<rect x="799" y="600" width="15" height="15" fill="#f9f9f9" />
<rect x="814" y="600" width="15" height="15" fill="#fdfdfd" />
<rect x="829" y="600" width="15" height="15" fill="#f9f9f9" />
<rect x="844" y="600" width="15" height="15" fill="#f5f5f5" />
<rect x="859" y="600" width="15" height="15" fill="#fdfdfd" />
<rect x="874" y="600" width="15" height="15" fill="#f5f5f5" />
<rect x="889" y="600" width="15" height="15" fill="#f7f7f7" />
<rect x="904" y="600" width="15" height="15" fill="#fbfbfb" />
<rect x="919" y="600" width="15" height="15" fill="#f9f9f9" />
<rect x="934" y="600" width="15" height="15" fill="#fbfbfb" />
<rect x="949" y="600" width="15" height="15" fill="#fdfdfd" />
<rect x="724" y="615" width="15" height="15" fill="#f7e4a8" />
<rect x="739" y="615" width="15" height="15" fill="#f8d4d0" />
<rect x="754" y="615" width="15" height="15" fill="#f5bdb5" />
<rect x="769" y="615" width="15" height="15" fill="#f0f0f0" />
<rect x="784" y="615" width="15" height="15" fill="#dcdcdc" />
<rect x="799" y="615" width="15" height="15" fill="#dcdcdc" />
<rect x="814" y="615" width="15" height="15" fill="#dadadb" />
<rect x="829" y="615" width="15" height="15" fill="#d8d9da" />
<rect x="844" y="615" width="15" height="15" fill="#e6e6e6" />
<rect x="859" y="615" width="15" height="15" fill="#dadadb" />
<rect x="874" y="615" width="15" height="15" fill="#d6d7d8" />
<rect x="889" y="615" width="15" height="15" fill="#dcdcdd" />
<rect x="904" y="615" width="15" height="15" fill="#dfdfdf" />
<rect x="919" y="615" width="15" height="15" fill="#d6d8d9" />
<rect x="934" y="615" width="15" height="15" fill="#e6e6e6" />
<rect x="949" y="615" width="15" height="15" fill="#f0f0f0" />
<rect x="724" y="660" width="15" height="15" fill="#fae5b5" />
<rect x="739" y="660" width="15" height="15" fill="#f8d3d0" />
<rect x="754" y="660" width="15" height="15" fill="#f3b9a9" />
<rect x="769" y="660" width="15" height="15" fill="#f6f6f6" />
<rect x="784" y="660" width="15" height="15" fill="#e3e3e3" />
<rect x="799" y="660" width="15" height="15" fill="#e0e0e0" />
<rect x="814" y="660" width="15" height="15" fill="#dddddd" />
<rect x="829" y="660" width="15" height="15" fill="#e6e6e6" />
<rect x="844" y="660" width="15" height="15" fill="#e2e2e2" />
<rect x="859" y="660" width="15" height="15" fill="#d9d9da" />
<rect x="874" y="660" width="15" height="15" fill="#e3e3e3" />
<rect x="889" y="660" width="15" height="15" fill="#e6e6e6" />
<rect x="904" y="660" width="15" height="15" fill="#e0e0e0" />
<rect x="919" y="660" width="15" height="15" fill="#e2e2e2" />
<rect x="934" y="660" width="15" height="15" fill="#eaeaea" />
<rect x="949" y="660" width="15" height="15" fill="#f2f2f2" />
<rect x="724" y="675" width="15" height="15" fill="#fbf1d8" />
<rect x="739" y="675" width="15" height="15" fill="#fbe9e9" />
<rect x="754" y="675" width="15" height="15" fill="#f7dcdc" />
<rect x="769" y="675" width="15" height="15" fill="#f8f8f8" />
<rect x="784" y="675" width="15" height="15" fill="#f3f3f3" />
<rect x="799" y="675" width="15" height="15" fill="#f1f1f1" />
<rect x="814" y="675" width="15" height="15" fill="#f1f1f1" />
<rect x="829" y="675" width="15" height="15" fill="#f3f3f3" />
<rect x="844" y="675" width="15" height="15" fill="#f1f1f1" />
<rect x="859" y="675" width="15" height="15" fill="#f2f2f2" />
<rect x="874" y="675" width="15" height="15" fill="#f1f1f1" />
<rect x="889" y="675" width="15" height="15" fill="#f3f3f3" />
<rect x="904" y="675" width="15" height="15" fill="#f0f0f0" />
<rect x="919" y="675" width="15" height="15" fill="#f2f2f2" />
<rect x="934" y="675" width="15" height="15" fill="#f6f6f6" />
<rect x="949" y="675" width="15" height="15" fill="#f8f8f8" />
<rect x="724" y="720" width="15" height="15" fill="#f5df95" />
<rect x="739" y="720" width="15" height="15" fill="#f7c0c0" />
<rect x="754" y="720" width="15" height="15" fill="#f19b90" />
<rect x="769" y="720" width="15" height="15" fill="#f3f5fc" />
<rect x="784" y="720" width="15" height="15" fill="#e2e6fb" />
<rect x="799" y="720" width="15" height="15" fill="#e0e5fb" />
<rect x="814" y="720" width="15" height="15" fill="#e2e6fb" />
<rect x="829" y="720" width="15" height="15" fill="#e0e4fb" />
<rect x="844" y="720" width="15" height="15" fill="#e3e7fb" />
<rect x="859" y="720" width="15" height="15" fill="#e8ebfc" />
<rect x="724" y="765" width="15" height="15" fill="#fdf9ec" />
<rect x="739" y="765" width="15" height="15" fill="#fdeded" />
<rect x="754" y="765" width="15" height="15" fill="#fce6e6" />
<rect x="724" y="780" width="15" height="15" fill="#f7e2a5" />
<rect x="739" y="780" width="15" height="15" fill="#f8cfcf" />
<rect x="754" y="780" width="15" height="15" fill="#f3a9a1" />
<rect x="769" y="780" width="15" height="15" fill="#f5f6fc" />
<rect x="784" y="780" width="15" height="15" fill="#e0e5fb" />
<rect x="799" y="780" width="15" height="15" fill="#e1e6fb" />
<rect x="814" y="780" width="15" height="15" fill="#e2e6fb" />
<rect x="829" y="780" width="15" height="15" fill="#e0e5fb" />
<rect x="844" y="780" width="15" height="15" fill="#e2e6fb" />
<rect x="859" y="780" width="15" height="15" fill="#e6eafc" />
<rect x="724" y="825" width="15" height="15" fill="#fbeedd" />
<rect x="739" y="825" width="15" height="15" fill="#f9dcd8" />
<rect x="754" y="825" width="15" height="15" fill="#f8d4d0" />
<rect x="769" y="825" width="15" height="15" fill="#fdfdfd" />
<rect x="784" y="825" width="15" height="15" fill="#f9fafd" />
<rect x="799" y="825" width="15" height="15" fill="#f8f9fd" />
<rect x="814" y="825" width="15" height="15" fill="#f9fafd" />
<rect x="829" y="825" width="15" height="15" fill="#f8f9fd" />
<rect x="844" y="825" width="15" height="15" fill="#f9fafd" />
<rect x="859" y="825" width="15" height="15" fill="#fbfbfd" />
<rect x="724" y="840" width="15" height="15" fill="#f8e3b0" />
<rect x="739" y="840" width="15" height="15" fill="#f6d4d1" />
<rect x="754" y="840" width="15" height="15" fill="#f5cbc6" />
<rect x="769" y="840" width="15" height="15" fill="#fdfdfd" />
<rect x="784" y="840" width="15" height="15" fill="#e5e9fb" />
<rect x="799" y="840" width="15" height="15" fill="#e6eafb" />
<rect x="814" y="840" width="15" height="15" fill="#e5e9fb" />
<rect x="829" y="840" width="15" height="15" fill="#e4e8fb" />
<rect x="844" y="840" width="15" height="15" fill="#e6eafb" />
<rect x="859" y="840" width="15" height="15" fill="#eaedfc" />
<rect x="724" y="885" width="15" height="15" fill="#f8e0a6" />
<rect x="739" y="885" width="15" height="15" fill="#f7cdcc" />
<rect x="754" y="885" width="15" height="15" fill="#f3b0a3" />
<rect x="769" y="885" width="15" height="15" fill="#f7f7fc" />
<rect x="784" y="885" width="15" height="15" fill="#e2e6fb" />
<rect x="799" y="885" width="15" height="15" fill="#e1e5fb" />
<rect x="814" y="885" width="15" height="15" fill="#e2e6fb" />
<rect x="829" y="885" width="15" height="15" fill="#e0e5fb" />
<rect x="844" y="885" width="15" height="15" fill="#e3e7fb" />
<rect x="859" y="885" width="15" height="15" fill="#e7eafc" />
<rect x="724" y="900" width="15" height="15" fill="#fcf8e8" />
<rect x="739" y="900" width="15" height="15" fill="#fceeee" />
<rect x="754" y="900" width="15" height="15" fill="#fbe9e9" />
<rect x="769" y="900" width="15" height="15" fill="#fdfdfd" />
<rect x="784" y="900" width="15" height="15" fill="#f5f6fd" />
<rect x="799" y="900" width="15" height="15" fill="#f5f6fd" />
<rect x="814" y="900" width="15" height="15" fill="#f4f6fd" />
<rect x="829" y="900" width="15" height="15" fill="#f5f6fd" />
<rect x="844" y="900" width="15" height="15" fill="#f5f6fd" />
<rect x="859" y="900" width="15" height="15" fill="#f8f9fd" />
<path d="M730 949 L733 942 L736 949 Z" stroke="none" stroke-width="1.5" fill="#f4c542" stroke-linecap="round" stroke-linejoin="round" />
<rect x="748" y="945" width="16" height="4" fill="#c0282d" />
</g></svg>
<circle cx="253.5" cy="894" r="12.2" fill="#030f33" stroke="#fff" stroke-width="1.1"/>
<path d="M256.5 888.5 L251 894 L256.5 899.5" stroke="#fff" stroke-width="1.6" fill="none" stroke-linecap="round" stroke-linejoin="round" />
<defs><linearGradient id="sh" x1="0" x2="1"><stop offset="0" stop-color="#000" stop-opacity="0"/><stop offset="1" stop-color="#000" stop-opacity="0.035"/></linearGradient></defs>
<rect x="1161" y="54" width="10" height="895" fill="url(#sh)" />
<rect x="1171" y="54" width="735" height="895" fill="#fff" />
<rect x="1170" y="54" width="1" height="895" fill="#dcdde1" />
<path d="M1205 81.2 L1199.5 86.2 L1205 91.2" stroke="#3c64f4" stroke-width="2" fill="none" stroke-linecap="round" stroke-linejoin="round" />
<text x="1467.4" y="93.8" font-size="21.2" fill="#313440" textLength="98.6" lengthAdjust="spacingAndGlyphs" stroke="#fff" stroke-width="0.35">Quick edit</text>
<text x="1830.6" y="90.8" font-size="14.8" fill="#3c64f4" textLength="34.6" lengthAdjust="spacingAndGlyphs" >Close</text>
<path d="M1879.5 80.5 L1891 92 M1891 80.5 L1879.5 92" stroke="#3c64f4" stroke-width="2" fill="none" stroke-linecap="round" stroke-linejoin="round" stroke-linecap="butt"/>
<rect x="1186" y="133.2" width="719" height="27.4" fill="#d3f3da" />
<text x="1416.9" y="152.3" font-size="13.5" fill="#5e6e73" textLength="182.8" lengthAdjust="spacingAndGlyphs" >Free use on your sandbox store.</text>
<text x="1608.6" y="152.3" font-size="13.5" fill="#2b3a3c" textLength="65.9" lengthAdjust="spacingAndGlyphs" >Learn more</text>
<rect x="1608.6" y="153.2" width="65.9" height="1" fill="#2b3a3c" />
<text x="1199.2" y="201.3" font-size="30.8" fill="#313440" textLength="100.5" lengthAdjust="spacingAndGlyphs" stroke="#fff" stroke-width="0.65">ID: #112</text>
<text x="1199.3" y="265.6" font-size="22.4" fill="#262a33" textLength="185" lengthAdjust="spacingAndGlyphs" >Custom metafields</text>
<rect x="1189" y="289.8" width="686" height="166.5" fill="none" rx="4" stroke="#e04343" stroke-width="3.7" />
<text x="1198.5" y="311.6" font-size="14.7" fill="#313440" font-weight="700" textLength="48.5" lengthAdjust="spacingAndGlyphs" >Vehicle</text>
<rect x="1198.5" y="322.5" width="658" height="113" fill="#eceef5" rx="3" stroke="#dcdfe8" stroke-width="1" />
<text x="1209.4" y="347.6" font-size="15.1" fill="#1f2024" textLength="66.5" lengthAdjust="spacingAndGlyphs">Year: <tspan fill="#8c1b70">2017</tspan></text>
<text x="1209.4" y="365.9" font-size="15.1" fill="#1f2024" textLength="72" lengthAdjust="spacingAndGlyphs" >Make: Ford</text>
<text x="1209.4" y="384.4" font-size="15.1" fill="#1f2024" textLength="84.6" lengthAdjust="spacingAndGlyphs">Model: F-<tspan fill="#8c1b70">150</tspan></text>
<text x="1209.4" y="402.8" font-size="15.1" fill="#1f2024" textLength="107.7" lengthAdjust="spacingAndGlyphs" >Submodel: Base</text>
<circle cx="1881" cy="373.2" r="2.2" fill="#000"/>
<circle cx="1881" cy="379" r="2.2" fill="#000"/>
<circle cx="1881" cy="384.8" r="2.2" fill="#000"/>
<rect x="1806" y="900" width="67" height="36" fill="#3c64f4" rx="4" />
<text x="1823.5" y="923.5" font-size="15.5" fill="#fff" font-weight="700" textLength="32" lengthAdjust="spacingAndGlyphs" >Save</text>
</svg></body></html>
